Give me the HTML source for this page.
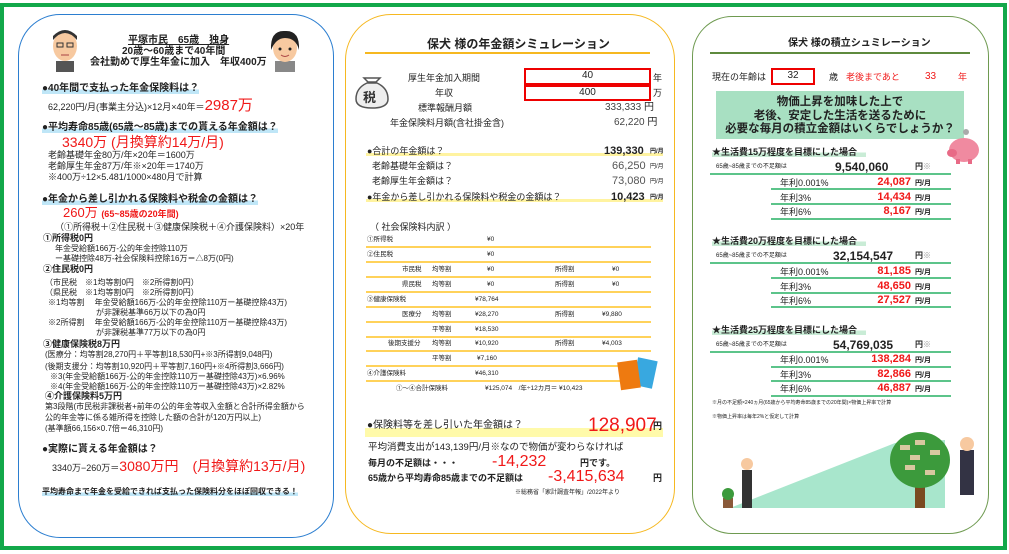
<!DOCTYPE html>
<html><head><meta charset="utf-8">
<style>
*{margin:0;padding:0;box-sizing:border-box}
body{width:1009px;height:554px;background:#fff;position:relative;overflow:hidden;font-family:"Liberation Sans","Noto Sans CJK JP",sans-serif;color:#222;font-size:9px}
.t{position:absolute;white-space:nowrap;line-height:1}
.b{font-weight:bold}
.r{color:#f01818}
.hl{background:linear-gradient(transparent 55%,#bfe6f7 55%)}
.hg{background:linear-gradient(transparent 50%,#c9ecd6 50%)}
.ol{position:absolute;height:2px;background:#ffd25a}
.gl{position:absolute;height:2px;background:#5cc48a}
.box{position:absolute;border:2px solid #e00;background:#fff;text-align:center;font-size:10px;line-height:12px}
.s{font-size:8px}
</style></head><body>
<div style="position:absolute;left:0;top:3px;width:1007px;height:547px;border:4px solid #12a84a"></div>

<!-- panel 1 -->
<div style="position:absolute;left:18px;top:14px;width:316px;height:524px;border:1.5px solid #2b7ed0;border-radius:42px"></div>
<svg style="position:absolute;left:48px;top:28px" width="34" height="44"><rect x="8" y="33" width="18" height="11" fill="#555"/><ellipse cx="17" cy="18" rx="12" ry="15" fill="#f7c9a0"/><path d="M5 12 Q17 -2 29 12 L29 8 Q17 -4 5 8Z" fill="#333"/><rect x="9" y="15" width="6" height="4" fill="none" stroke="#333"/><rect x="19" y="15" width="6" height="4" fill="none" stroke="#333"/><path d="M13 27 h8" stroke="#a44"/></svg>
<svg style="position:absolute;left:268px;top:28px" width="34" height="44"><rect x="7" y="33" width="20" height="11" fill="#888"/><ellipse cx="17" cy="20" rx="12" ry="14" fill="#f7c9a0"/><path d="M3 22 Q2 2 17 3 Q32 2 31 22 Q28 10 17 10 Q8 10 3 22Z" fill="#222"/><circle cx="12" cy="21" r="1.5" fill="#222"/><circle cx="22" cy="21" r="1.5" fill="#222"/><path d="M13 27 q4 3 8 0" stroke="#a44" fill="none"/></svg>
<div class="t b" style="left:128px;top:36px;font-size:10px;text-decoration:underline">平塚市民　65歳　独身</div>
<div class="t b" style="left:122px;top:47px;font-size:10px">20歳～60歳まで40年間</div>
<div class="t b" style="left:90px;top:58px;font-size:10px">会社勤めで厚生年金に加入　年収400万</div>
<div class="t b hl" style="left:42px;top:84px;font-size:10px">●40年間で支払った年金保険料は？</div>
<div class="t" style="left:48px;top:98px">62,220円/月(事業主分込)×12月×40年＝<span class="r" style="font-size:15px">2987万</span></div>
<div class="t b hl" style="left:42px;top:123px;font-size:10px">●平均寿命85歳(65歳～85歳)までの貰える年金額は？</div>
<div class="t r" style="left:62px;top:135px;font-size:14px">3340万 (月換算約14万/月)</div>
<div class="t" style="left:48px;top:151px">老齢基礎年金80万/年×20年＝1600万</div>
<div class="t" style="left:48px;top:162px">老齢厚生年金87万/年※×20年＝1740万</div>
<div class="t" style="left:48px;top:173px">※400万÷12×5.481/1000×480月で計算</div>
<div class="t b hl" style="left:42px;top:195px;font-size:10px">●年金から差し引かれる保険料や税金の金額は？</div>
<div class="t r" style="left:63px;top:206px;font-size:13px">260万 <span style="font-size:9px;font-weight:bold">(65~85歳の20年間)</span></div>
<div class="t" style="left:55px;top:223px">（①所得税＋②住民税＋③健康保険税＋④介護保険料）×20年</div>
<div class="t b" style="left:43px;top:234px">①所得税0円</div>
<div class="t s" style="left:55px;top:245px">年金受給額166万-公的年金控除110万</div>
<div class="t s" style="left:55px;top:255px">ー基礎控除48万-社会保険料控除16万＝△8万(0円)</div>
<div class="t b" style="left:43px;top:265px">②住民税0円</div>
<div class="t s" style="left:45px;top:279px">（市民税　※1均等割0円　※2所得割0円）</div>
<div class="t s" style="left:45px;top:289px">（県民税　※1均等割0円　※2所得割0円）</div>
<div class="t s" style="left:48px;top:299px">※1均等割　 年金受給額166万-公的年金控除110万ー基礎控除43万)</div>
<div class="t s" style="left:96px;top:309px">が非課税基準66万以下の為0円</div>
<div class="t s" style="left:48px;top:319px">※2所得割　 年金受給額166万-公的年金控除110万ー基礎控除43万)</div>
<div class="t s" style="left:96px;top:329px">が非課税基準77万以下の為0円</div>
<div class="t b" style="left:43px;top:340px">③健康保険税8万円</div>
<div class="t s" style="left:45px;top:351px">(医療分：均等割28,270円＋平等割18,530円+※3所得割9,048円)</div>
<div class="t s" style="left:45px;top:363px">(後期支援分：均等割10,920円＋平等割7,160円+※4所得割3,666円)</div>
<div class="t s" style="left:50px;top:373px">※3(年金受給額166万-公的年金控除110万ー基礎控除43万)×6.96%</div>
<div class="t s" style="left:50px;top:383px">※4(年金受給額166万-公的年金控除110万ー基礎控除43万)×2.82%</div>
<div class="t b" style="left:45px;top:392px">④介護保険料5万円</div>
<div class="t s" style="left:45px;top:403px">第3段階(市民税非課税者+前年の公的年金等収入金額と合計所得金額から</div>
<div class="t s" style="left:45px;top:414px">公的年金等に係る雑所得を控除した額の合計が120万円以上)</div>
<div class="t s" style="left:45px;top:425px">(基準額66,156×0.7倍＝46,310円)</div>
<div class="t b" style="left:42px;top:445px;font-size:10px">●実際に貰える年金額は？</div>
<div class="t" style="left:52px;top:459px">3340万−260万＝<span class="r" style="font-size:14px">3080万円　(月換算約13万/月)</span></div>
<div class="t b hl" style="left:42px;top:488px;font-size:8px">平均寿命まで年金を受給できれば支払った保険料分をほぼ回収できる！</div>

<!-- panel 2 -->
<div style="position:absolute;left:345px;top:14px;width:330px;height:520px;border:1.5px solid #f6b820;border-radius:46px"></div>
<div class="t b" style="left:427px;top:38px;font-size:12px">保犬 様の年金額シミュレーション</div>
<div style="position:absolute;left:365px;top:52px;width:285px;height:2px;background:#f6b820"></div>
<svg style="position:absolute;left:354px;top:72px" width="36" height="38"><path d="M10 6 L14 10 L22 10 L26 6 Z" fill="#fff" stroke="#555" stroke-width="1.5"/><path d="M13 11 Q2 16 2 27 Q2 36 18 36 Q34 36 34 27 Q34 16 23 11Z" fill="#eee" stroke="#555" stroke-width="1.5"/><text x="9" y="30" font-size="13" font-weight="bold" fill="#333" font-family="Noto Sans CJK JP">税</text></svg>
<div class="t" style="left:408px;top:74px">厚生年金加入期間</div>
<div class="box" style="left:524px;top:68px;width:127px;height:17px">40</div>
<div class="t" style="left:653px;top:74px">年</div>
<div class="t" style="left:435px;top:89px">年収</div>
<div class="box" style="left:524px;top:85px;width:127px;height:16px">400</div>
<div class="t" style="left:653px;top:89px">万</div>
<div class="t" style="left:418px;top:104px">標準報酬月額</div>
<div class="t" style="left:605px;top:103px;font-size:10px;color:#444">333,333 <span style="color:#222">円</span></div>
<div class="t" style="left:390px;top:119px">年金保険料月額(含社掛金含)</div>
<div class="t" style="left:614px;top:118px;font-size:10px;color:#444">62,220 <span style="color:#222">円</span></div>
<div style="position:absolute;left:366px;top:153px;width:297px;height:3px;background:#fff3a0"></div>
<div class="t" style="left:367px;top:147px">●合計の年金額は？</div>
<div class="t b" style="left:604px;top:146px;font-size:11px">139,330</div><div class="t b" style="left:650px;top:149px;font-size:6px">円/月</div>
<div class="t" style="left:372px;top:162px">老齢基礎年金額は？</div>
<div class="t" style="left:612px;top:161px;font-size:11px;color:#555">66,250</div><div class="t" style="left:650px;top:164px;font-size:6px">円/月</div>
<div class="t" style="left:372px;top:177px">老齢厚生年金額は？</div>
<div class="t" style="left:612px;top:176px;font-size:11px;color:#555">73,080</div><div class="t" style="left:650px;top:179px;font-size:6px">円/月</div>
<div style="position:absolute;left:366px;top:199px;width:297px;height:3px;background:#fff3a0"></div>
<div class="t" style="left:367px;top:193px">●年金から差し引かれる保険料や税金の金額は？</div>
<div class="t b" style="left:611px;top:192px;font-size:11px">10,423</div><div class="t b" style="left:650px;top:195px;font-size:6px">円/月</div>
<div class="t" style="left:370px;top:223px">（ 社会保険料内訳 ）</div>
<div style="font-size:6.5px">
<div class="t" style="left:367px;top:237px">①所得税</div><div class="t" style="left:487px;top:237px">¥0</div>
<div class="t" style="left:367px;top:252px">②住民税</div><div class="t" style="left:487px;top:252px">¥0</div>
<div class="t" style="left:402px;top:267px">市民税</div><div class="t" style="left:432px;top:267px">均等割</div><div class="t" style="left:487px;top:267px">¥0</div><div class="t" style="left:555px;top:267px">所得割</div><div class="t" style="left:612px;top:267px">¥0</div>
<div class="t" style="left:402px;top:282px">県民税</div><div class="t" style="left:432px;top:282px">均等割</div><div class="t" style="left:487px;top:282px">¥0</div><div class="t" style="left:555px;top:282px">所得割</div><div class="t" style="left:612px;top:282px">¥0</div>
<div class="t" style="left:367px;top:297px">③健康保険税</div><div class="t" style="left:475px;top:297px">¥78,764</div>
<div class="t" style="left:402px;top:312px">医療分</div><div class="t" style="left:432px;top:312px">均等割</div><div class="t" style="left:475px;top:312px">¥28,270</div><div class="t" style="left:555px;top:312px">所得割</div><div class="t" style="left:602px;top:312px">¥9,880</div>
<div class="t" style="left:432px;top:327px">平等割</div><div class="t" style="left:475px;top:327px">¥18,530</div>
<div class="t" style="left:388px;top:341px">後期支援分</div><div class="t" style="left:432px;top:341px">均等割</div><div class="t" style="left:475px;top:341px">¥10,920</div><div class="t" style="left:555px;top:341px">所得割</div><div class="t" style="left:602px;top:341px">¥4,003</div>
<div class="t" style="left:432px;top:356px">平等割</div><div class="t" style="left:477px;top:356px">¥7,160</div>
<div class="t" style="left:367px;top:371px">④介護保険料</div><div class="t" style="left:475px;top:371px">¥46,310</div>
<div class="t" style="left:396px;top:386px">①～④合計保険料</div><div class="t" style="left:485px;top:386px">¥125,074　/年÷12カ月＝ ¥10,423</div>
</div>
<div class="ol" style="left:366px;top:246px;width:285px"></div>
<div class="ol" style="left:366px;top:261px;width:285px"></div>
<div class="ol" style="left:366px;top:276px;width:285px"></div>
<div class="ol" style="left:366px;top:291px;width:285px"></div>
<div class="ol" style="left:366px;top:306px;width:285px"></div>
<div class="ol" style="left:366px;top:321px;width:285px"></div>
<div class="ol" style="left:366px;top:336px;width:285px"></div>
<div class="ol" style="left:366px;top:350px;width:285px"></div>
<div class="ol" style="left:366px;top:365px;width:285px"></div>
<div class="ol" style="left:366px;top:380px;width:285px"></div>
<svg style="position:absolute;left:615px;top:356px" width="50" height="40"><rect x="20" y="3" width="20" height="28" fill="#38a8e0" transform="rotate(12 30 17)"/><rect x="4" y="5" width="20" height="28" fill="#ee7a10" transform="rotate(-8 14 19)"/></svg>
<div style="position:absolute;left:365px;top:428px;width:298px;height:9px;background:#fffaaa"></div>
<div class="t" style="left:367px;top:421px;font-size:10px">●保険料等を差し引いた年金額は？</div>
<div class="t r" style="left:588px;top:416px;font-size:19px">128,907</div>
<div class="t b" style="left:653px;top:422px;font-size:9px">円</div>
<div class="t" style="left:368px;top:443px;font-size:9.5px">平均消費支出が143,139円/月※なので物価が変わらなければ</div>
<div class="t b" style="left:368px;top:459px">毎月の不足額は・・・</div>
<div class="t r" style="left:492px;top:454px;font-size:16px">-14,232</div>
<div class="t b" style="left:580px;top:459px">円です。</div>
<div class="t b" style="left:368px;top:474px">65歳から平均寿命85歳までの不足額は</div>
<div class="t r" style="left:548px;top:469px;font-size:16px">-3,415,634</div>
<div class="t b" style="left:653px;top:474px">円</div>
<div class="t" style="left:515px;top:490px;font-size:6px">※総務省「家計調査年報」/2022年より</div>

<!-- panel 3 -->
<div style="position:absolute;left:692px;top:16px;width:297px;height:518px;border:1.5px solid #6e9a50;border-radius:40px"></div>
<div class="t b" style="left:788px;top:39px;font-size:10px">保犬 様の積立シュミレーション</div>
<div style="position:absolute;left:710px;top:52px;width:260px;height:2px;background:#5e8a3e"></div>
<div class="t" style="left:712px;top:73px">現在の年齢は</div>
<div class="box" style="left:771px;top:68px;width:44px;height:17px">32</div>
<div class="t" style="left:829px;top:73px">歳</div>
<div class="t r" style="left:846px;top:73px">老後まであと</div>
<div class="t r" style="left:925px;top:72px;font-size:10px">33</div>
<div class="t r" style="left:958px;top:73px">年</div>
<div style="position:absolute;left:716px;top:91px;width:248px;height:48px;background:#a8e0c2"></div>
<div class="t b" style="left:716px;top:96px;width:248px;text-align:center;font-size:11.5px;line-height:13.5px;white-space:normal">物価上昇を加味した上で<br>老後、安定した生活を送るために<br>必要な毎月の積立金額はいくらでしょうか？</div>
<svg style="position:absolute;left:942px;top:127px" width="40" height="40"><circle cx="24" cy="5" r="3" fill="#aaa"/><ellipse cx="22" cy="23" rx="15" ry="12" fill="#f08aa0"/><ellipse cx="10" cy="26" rx="5" ry="4" fill="#e86a86"/><rect x="14" y="32" width="4" height="5" fill="#e86a86"/><rect x="26" y="32" width="4" height="5" fill="#e86a86"/></svg>

<div class="t b hg" style="left:712px;top:148px;font-size:9px">★生活費15万程度を目標にした場合　</div>
<div class="t" style="left:716px;top:164px;font-size:6px">65歳~85歳までの不足額は</div>
<div class="t b" style="left:835px;top:161px;font-size:12px">9,540,060</div>
<div class="t b" style="left:915px;top:163px;font-size:8px">円<span style="color:#999">※</span></div>
<div class="gl" style="left:710px;top:173px;width:241px"></div>
<div class="t" style="left:780px;top:179px">年利0.001%</div><div class="t r b" style="left:869px;top:177px;font-size:11px;width:42px;text-align:right">24,087</div><div class="t b" style="left:915px;top:180px;font-size:7px">円/月</div>
<div class="gl" style="left:771px;top:188px;width:180px"></div>
<div class="t" style="left:780px;top:194px">年利3%</div><div class="t r b" style="left:869px;top:192px;font-size:11px;width:42px;text-align:right">14,434</div><div class="t b" style="left:915px;top:195px;font-size:7px">円/月</div>
<div class="gl" style="left:771px;top:203px;width:180px"></div>
<div class="t" style="left:780px;top:208px">年利6%</div><div class="t r b" style="left:869px;top:206px;font-size:11px;width:42px;text-align:right">8,167</div><div class="t b" style="left:915px;top:209px;font-size:7px">円/月</div>
<div class="gl" style="left:771px;top:218px;width:180px"></div>

<div class="t b hg" style="left:712px;top:237px;font-size:9px">★生活費20万程度を目標にした場合　</div>
<div class="t" style="left:716px;top:253px;font-size:6px">65歳~85歳までの不足額は</div>
<div class="t b" style="left:833px;top:250px;font-size:12px">32,154,547</div>
<div class="t b" style="left:915px;top:252px;font-size:8px">円<span style="color:#999">※</span></div>
<div class="gl" style="left:710px;top:262px;width:241px"></div>
<div class="t" style="left:780px;top:268px">年利0.001%</div><div class="t r b" style="left:869px;top:266px;font-size:11px;width:42px;text-align:right">81,185</div><div class="t b" style="left:915px;top:269px;font-size:7px">円/月</div>
<div class="gl" style="left:771px;top:277px;width:180px"></div>
<div class="t" style="left:780px;top:283px">年利3%</div><div class="t r b" style="left:869px;top:281px;font-size:11px;width:42px;text-align:right">48,650</div><div class="t b" style="left:915px;top:284px;font-size:7px">円/月</div>
<div class="gl" style="left:771px;top:292px;width:180px"></div>
<div class="t" style="left:780px;top:297px">年利6%</div><div class="t r b" style="left:869px;top:295px;font-size:11px;width:42px;text-align:right">27,527</div><div class="t b" style="left:915px;top:298px;font-size:7px">円/月</div>
<div class="gl" style="left:771px;top:306px;width:180px"></div>

<div class="t b hg" style="left:712px;top:326px;font-size:9px">★生活費25万程度を目標にした場合　</div>
<div class="t" style="left:716px;top:342px;font-size:6px">65歳~85歳までの不足額は</div>
<div class="t b" style="left:833px;top:339px;font-size:12px">54,769,035</div>
<div class="t b" style="left:915px;top:341px;font-size:8px">円<span style="color:#999">※</span></div>
<div class="gl" style="left:710px;top:351px;width:241px"></div>
<div class="t" style="left:780px;top:356px">年利0.001%</div><div class="t r b" style="left:860px;top:354px;font-size:11px;width:51px;text-align:right">138,284</div><div class="t b" style="left:915px;top:357px;font-size:7px">円/月</div>
<div class="gl" style="left:771px;top:366px;width:180px"></div>
<div class="t" style="left:780px;top:371px">年利3%</div><div class="t r b" style="left:869px;top:369px;font-size:11px;width:42px;text-align:right">82,866</div><div class="t b" style="left:915px;top:372px;font-size:7px">円/月</div>
<div class="gl" style="left:771px;top:380px;width:180px"></div>
<div class="t" style="left:780px;top:385px">年利6%</div><div class="t r b" style="left:869px;top:383px;font-size:11px;width:42px;text-align:right">46,887</div><div class="t b" style="left:915px;top:386px;font-size:7px">円/月</div>
<div class="gl" style="left:771px;top:395px;width:180px"></div>
<div class="t" style="left:712px;top:401px;font-size:5px">※月の不足額×240ヵ月(65歳から平均寿命85歳までの20年間)×物価上昇率で計算</div>
<div class="t" style="left:712px;top:415px;font-size:5px">※物価上昇率は毎年2%と仮定して計算</div>
<svg style="position:absolute;left:710px;top:420px" width="285" height="95">
<polygon points="20,88 185,23 235,20 235,88" fill="#a8e6cc"/>
<rect x="205" y="55" width="10" height="33" fill="#7a4a20"/>
<ellipse cx="210" cy="40" rx="30" ry="28" fill="#3c9a3c"/>
<g fill="#d8c8a0"><rect x="190" y="25" width="10" height="5"/><rect x="205" y="20" width="10" height="5"/><rect x="220" y="30" width="10" height="5"/><rect x="195" y="45" width="10" height="5"/><rect x="215" y="50" width="10" height="5"/><rect x="200" y="35" width="10" height="5"/></g>
<rect x="32" y="50" width="10" height="38" fill="#333"/><circle cx="37" cy="44" r="6" fill="#f7c9a0"/>
<rect x="13" y="78" width="10" height="10" fill="#8a5a3a"/><circle cx="18" cy="74" r="6" fill="#3c9a3c"/>
<rect x="250" y="30" width="14" height="45" fill="#334"/><circle cx="257" cy="24" r="7" fill="#f7c9a0"/>
</svg>
</body></html>
